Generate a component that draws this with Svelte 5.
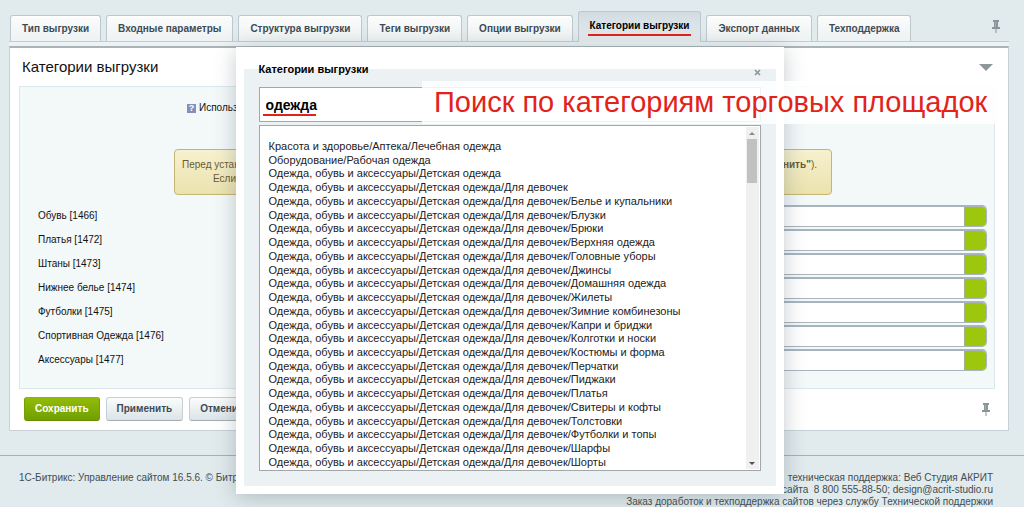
<script>
  let activeTab = $state('Категории выгрузки');
  let search = $state('одежда');
  let open = $state(true);

  const tabs = [
    'Тип выгрузки',
    'Входные параметры',
    'Структура выгрузки',
    'Теги выгрузки',
    'Опции выгрузки',
    'Категории выгрузки',
    'Экспорт данных',
    'Техподдержка'
  ];

  let categories = $state([
    { id: 1466, name: 'Обувь', value: '' },
    { id: 1472, name: 'Платья', value: '' },
    { id: 1473, name: 'Штаны', value: '' },
    { id: 1474, name: 'Нижнее белье', value: '' },
    { id: 1475, name: 'Футболки', value: '' },
    { id: 1476, name: 'Спортивная Одежда', value: '' },
    { id: 1477, name: 'Аксессуары', value: '' }
  ]);

  const kids = 'Одежда, обувь и аксессуары/Детская одежда';
  const girls = [
    'Белье и купальники',
    'Блузки',
    'Брюки',
    'Верхняя одежда',
    'Головные уборы',
    'Джинсы',
    'Домашняя одежда',
    'Жилеты',
    'Зимние комбинезоны',
    'Капри и бриджи',
    'Колготки и носки',
    'Костюмы и форма',
    'Перчатки',
    'Пиджаки',
    'Платья',
    'Свитеры и кофты',
    'Толстовки',
    'Футболки и топы',
    'Шарфы',
    'Шорты'
  ];
  const results = [
    'Красота и здоровье/Аптека/Лечебная одежда',
    'Оборудование/Рабочая одежда',
    kids,
    `${kids}/Для девочек`,
    ...girls.map((g) => `${kids}/Для девочек/${g}`)
  ];
</script>

{#snippet pin()}
  <svg width="8" height="13" viewBox="0 0 8 13" aria-hidden="true">
    <path d="M1 0h6v2H6v5h2v2H4.500v4h-1V9H0V7h2V2H1z" fill="#8a9499" />
    <path d="M3 2h1v5H3z" fill="#a4aeb2" />
  </svg>
{/snippet}

<div class="page">
  <nav class="tabs">
    {#each tabs as tab}
      <button class="tab" class:active={tab === activeTab} onclick={() => (activeTab = tab)}>
        <span>{tab}</span>
      </button>
    {/each}
    <button class="pin" aria-label="Закрепить">{@render pin()}</button>
  </nav>

  <main class="panel">
    <header class="panel-head">
      <h1>Категории выгрузки</h1>
      <button class="collapse" aria-label="Свернуть"></button>
    </header>

    <section class="content">
      <p class="option"><span class="help">?</span> Использовать</p>
      <div class="notice">
        <p class="spread"><span>Перед установкой</span><span><b>"Сохранить"</b>).</span></p>
        <p class="second">Если</p>
      </div>
      {#each categories as cat}
        <div class="row">
          <label for="cat-{cat.id}">{cat.name} [{cat.id}]</label>
          <div class="field">
            <input id="cat-{cat.id}" type="text" bind:value={cat.value} />
            <button aria-label="Выбрать категорию" onclick={() => (open = true)}></button>
          </div>
        </div>
      {/each}
    </section>

    <div class="actions">
      <button class="btn save">Сохранить</button>
      <button class="btn">Применить</button>
      <button class="btn">Отменить</button>
      <button class="pin" aria-label="Закрепить">{@render pin()}</button>
    </div>
  </main>

  <footer>
    <span>1С-Битрикс: Управление сайтом 16.5.6. © Битрикс, 2016</span>
    <div class="support">
      техническая поддержка: Веб Студия АКРИТ<br />
      сайта &nbsp;8 800 555-88-50; design@acrit-studio.ru<br />
      Заказ доработок и техподдержка сайтов через службу Технической поддержки
    </div>
  </footer>

  {#if open}
    <div class="dialog" role="dialog" aria-label="Категории выгрузки">
      <fieldset>
        <legend>Категории выгрузки</legend>
        <div class="search">
          <input type="text" aria-label="Поиск" bind:value={search} />
          <i class="underline"></i>
        </div>
        <div class="listbox">
          <ul>
            {#each results as item}
              <li>{item}</li>
            {/each}
          </ul>
          <div class="scroll">
            <i class="up"></i>
            <i class="thumb"></i>
            <i class="down"></i>
          </div>
        </div>
      </fieldset>
      <button class="close" aria-label="Закрыть" onclick={() => (open = false)}>
        <svg width="7" height="7" viewBox="0 0 7 7"><path d="M1 1l5 5M6 1L1 6" stroke="#8d979c" stroke-width="1.700" /></svg>
      </button>
    </div>
    <div class="callout">Поиск по категориям торговых площадок</div>
  {/if}
</div>

<style>
  :global(body) {
    margin: 0;
    background: #e1eaec;
  }

  .page {
    position: relative;
    height: 100vh;
    overflow: hidden;
    box-sizing: border-box;
    padding: 10px 15px 0 9px;
    font: 10px/14px 'Liberation Sans', Arial, sans-serif;
    color: #111;
  }

  button,
  input {
    font: inherit;
    color: inherit;
    box-sizing: border-box;
  }

  p,
  h1,
  ul {
    margin: 0;
    padding: 0;
  }

  /* tabs */
  .tabs {
    display: flex;
    align-items: flex-end;
    gap: 5px;
    height: 31px;
    padding-left: 1px;
    border-bottom: 1px solid #c3cdd1;
  }

  .tab {
    height: 26px;
    padding: 0 11px;
    border: 1px solid #bcc8cd;
    border-bottom: 0;
    border-radius: 3px 3px 0 0;
    background: linear-gradient(#fbfcfc, #edf2f3);
    box-shadow: inset 0 1px #fff;
    font-weight: bold;
    color: #3f4b54;
    white-space: nowrap;
  }

  .tab.active {
    height: 31px;
    margin-bottom: -1px;
    background: linear-gradient(#d2dce0, #e6edef);
    box-shadow: none;
    color: #000;
  }

  .tab.active span {
    display: block;
    margin: 0 -2px;
    padding: 0 2px 1px;
    border-bottom: 2px solid #e2231a;
  }

  .pin {
    display: flex;
    margin-left: auto;
    padding: 0;
    border: 0;
    background: none;
  }

  .tabs .pin {
    margin-right: 9px;
    margin-bottom: 8px;
  }

  /* main panel */
  .panel {
    margin-top: 4px;
    border: 1px solid #c8d1d5;
    border-top: 2px solid #aab3b7;
    background: #fff;
    box-shadow: 0 -4px #edf2f4;
  }

  .panel-head {
    display: flex;
    align-items: center;
    justify-content: space-between;
    height: 38px;
    padding: 0 15px 0 12px;
  }

  h1 {
    font-size: 15px;
    font-weight: normal;
  }

  .collapse {
    width: 0;
    height: 0;
    padding: 0;
    border: 7px solid transparent;
    border-top-color: #8d979c;
    border-bottom: 0;
    background: none;
  }

  .content {
    margin: 0 13px 0 9px;
    padding: 14px 7px 15px 18px;
    border: 1px solid #dce7ed;
    background: #f3f8f9;
  }

  .option {
    display: flex;
    align-items: center;
    gap: 3px;
    padding-left: 149px;
  }

  .help {
    width: 9px;
    height: 9px;
    background: #8490b8;
    color: #fff;
    font-size: 9px;
    font-weight: bold;
    line-height: 9px;
    text-align: center;
  }

  .notice {
    margin: 34px 155px 10px 136px;
    padding: 8px 14px 8px 7px;
    border: 1px solid #c3b673;
    border-radius: 4px;
    background: linear-gradient(#f6f1cf, #ebe2ae);
    color: #6b5a33;
  }

  .spread {
    display: flex;
    justify-content: space-between;
  }

  .second {
    padding-left: 31px;
  }

  .row {
    display: flex;
    align-items: center;
    height: 22px;
    margin-bottom: 2px;
  }

  .row label {
    flex: 0 0 400px;
  }

  .field {
    flex: 1;
    display: flex;
    height: 22px;
    box-sizing: border-box;
    overflow: hidden;
    border: 1px solid #aab4bf;
    border-top-width: 2px;
    border-radius: 5px;
    background: #fff;
  }

  .field input {
    flex: 1;
    min-width: 0;
    border: 0;
    background: none;
  }

  .field button {
    width: 22px;
    border: 0;
    border-left: 1px solid #a5b08d;
    background: #9cc70d;
  }

  .actions {
    display: flex;
    align-items: center;
    gap: 6px;
    padding: 8px 18px 9px 14px;
  }

  .btn {
    height: 24px;
    padding: 0 10px;
    border: 1px solid #c5cfd4;
    border-bottom-color: #a4adb1;
    border-radius: 3px;
    background: linear-gradient(#fafcfc, #dbe4e7);
    font-weight: bold;
    color: #3f4b54;
  }

  .btn.save {
    border-color: #8eb305 #76a000 #678b05;
    background: linear-gradient(#92bb09, #70a000);
    color: #fff;
  }

  /* footer */
  footer {
    display: flex;
    justify-content: space-between;
    margin: 24px -15px 0 -9px;
    padding: 16px 31px 0 19px;
    border-top: 1px solid #9fb1c3;
    line-height: 12px;
    color: #414d53;
  }

  .support {
    text-align: right;
  }

  /* category search dialog */
  .dialog {
    position: absolute;
    top: 47px;
    left: 23%;
    width: 548px;
    box-sizing: border-box;
    padding: 15px 8px 8px;
    background: #fff;
    box-shadow: 0 3px 20px rgba(60, 80, 90, 0.3);
  }

  fieldset {
    margin: 0;
    padding: 11px 15px 15px;
    border: 0;
    background: #ecf1f4;
  }

  legend {
    padding: 0;
    font-size: 11px;
    font-weight: bold;
    color: #000;
  }

  .close {
    position: absolute;
    top: 22px;
    right: 23px;
    display: flex;
    padding: 0;
    border: 0;
    background: none;
  }

  .search {
    position: relative;
    margin-bottom: 3px;
  }

  .search input {
    display: block;
    width: 100%;
    height: 35px;
    padding: 0 6px;
    border: 1px solid #a2a7aa;
    background: #fff;
    font-size: 14px;
    font-weight: bold;
    color: #000;
  }

  .underline {
    position: absolute;
    bottom: 6px;
    left: 4px;
    width: 53px;
    height: 2px;
    background: #e2231a;
  }

  .listbox {
    display: flex;
    height: 346px;
    box-sizing: border-box;
    border: 1px solid #a2a7aa;
    background: #fff;
  }

  ul {
    flex: 1;
    display: flex;
    flex-direction: column;
    justify-content: space-between;
    padding: 14px 9px 1px;
    list-style: none;
    font-size: 11px;
    line-height: 13px;
    color: #222;
  }

  .scroll {
    display: flex;
    flex-direction: column;
    align-items: center;
    width: 13px;
    margin: 1px;
    background: #f0f0f0;
  }

  .up,
  .down {
    margin: 5px 0 4px;
    border: 3px solid transparent;
  }

  .up {
    border-top: 0;
    border-bottom-color: #8a8a8a;
  }

  .thumb {
    width: 10px;
    height: 44px;
    background: #c1c1c1;
  }

  .down {
    margin-top: auto;
    border-bottom: 0;
    border-top-color: #505050;
  }

  .callout {
    position: absolute;
    top: 81px;
    left: 422px;
    right: 29px;
    padding: 0 12px;
    background: rgba(255, 255, 255, 0.85);
    font-size: 29px;
    line-height: 43px;
    white-space: nowrap;
    color: #e2231a;
  }
</style>
